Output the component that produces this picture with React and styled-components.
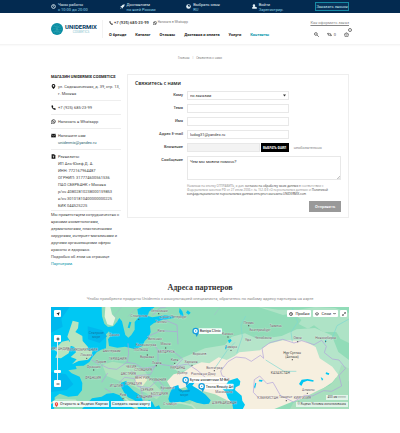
import React from 'react';
import styled, { createGlobalStyle } from 'styled-components';

const Global = createGlobalStyle`
  * { box-sizing: border-box; }
  body { margin: 0; background: #fff; color: #333; font: 4px/7px Roboto, "Noto Sans", sans-serif; }
  button, input, select, textarea { font: inherit; color: inherit; margin: 0; }
  a { color: inherit; text-decoration: none; }
  svg { display: block; flex: none; }
`;

const TopBar = styled.div`
  background: #032a50; color: #e3f0f6; height: 13px; padding: 0 51px;
  display: grid; grid-template-columns: 69fr 67fr 66fr 64fr 32fr; align-items: center;
`;
const TopItem = styled.a`
  display: flex; align-items: center; gap: 2px; line-height: 5px; white-space: nowrap;
  small { font-size: 4px; color: #8fd6e6; display: block; }
`;
const OrderCall = styled.button`
  height: 9px; border: 1px solid #168aa5; background: #08335a; color: #c2e9f0; padding: 0;
  line-height: 6px; font-size: 4px; white-space: nowrap;
`;
const Header = styled.header`
  height: 32px; padding: 0 51px; display: flex; border-bottom: 1px solid #f4f4f4; box-shadow: 0 1px 1px #fafafa;
`;
const Logo = styled.a`
  display: flex; align-items: center; width: 52px; gap: 2px; margin: 7px 0 6px; border-right: 1px solid #f3f3f3;
`;
const LogoText = styled.span`
  display: flex; flex-direction: column; align-items: center; line-height: 4px;
  b { font: 700 6px/6px Roboto, sans-serif; color: #073b61; }
  small { font-size: 3px; color: #7fc0cc; }
`;
const HeaderMain = styled.div`
  flex: 1; display: flex; flex-direction: column; padding: 6px 0 0 6px; gap: 5px;
`;
const HeaderRow = styled.div`display: flex; justify-content: space-between; align-items: center;`;
const Contacts = styled.div`
  display: flex; align-items: center; gap: 1px; color: #222;
`;
const Phone = styled.a`font-weight: 500; margin-right: 3px;`;
const Chat = styled.a`font-size: 3px; color: #777;`;
const Help = styled.a`color: #888; text-decoration: underline;`;
const Nav = styled.nav`display: flex; gap: 9px; font-weight: 700;`;
const NavLink = styled.a`color: ${p => (p.$active ? '#0795aa' : '#222')}; white-space: nowrap;`;
const Tools = styled.div`display: flex; align-items: center; gap: 8px;`;
const Tool = styled.button`
  position: relative; display: flex; gap: 2px; align-items: center; border: 0; padding: 0; background: none; line-height: 6px; color: #555;
`;
const Badge = styled.span`
  position: absolute; right: -3px; top: -4px; width: 4px; height: 4px; border: 1px solid #777; border-radius: 50%; background: #fff;
`;
const Crumbs = styled.nav`
  display: flex; justify-content: center; gap: 3px; padding-top: 10px; color: #888; height: 29px; font-size: 3px;
`;
const Main = styled.main`
  padding: 0 51px; display: grid; grid-template-columns: 70px 1fr; column-gap: 6px; align-items: start;
`;
const SideTitle = styled.h2`
  font-size: 4px; line-height: 6px; font-weight: 700; margin: 0; color: #222; white-space: nowrap;
`;
const SideRow = styled.div`
  display: flex; gap: 2px; padding: 3px 0; border-bottom: 1px solid #eee; color: #444; white-space: nowrap;
  &:last-of-type { padding-bottom: 1px; }
  svg { margin-top: 1px; color: #111; }
`;
const Accent = styled.a`color: #0795aa;`;
const Mail = styled.a`color: #24606c;`;
const SideText = styled.p`margin: 0; color: #444; white-space: nowrap;`;
const Panel = styled.form`border: 1px solid #eee; padding: 4px 7px 5px;`;
const PanelTitle = styled.h1`font: 600 5px/8px "Open Sans", sans-serif; margin: 0 0 4px; color: #222;`;
const Field = styled.div`
  display: grid; grid-template-columns: 48px 1fr; column-gap: 4px; margin-bottom: 4px;
`;
const Label = styled.label`text-align: right; line-height: 8px; font-weight: 500; color: #444;`;
const Control = styled.div`
  position: relative; width: ${p => (p.$wide ? '100%' : '66%')};
`;
const Input = styled.input`
  display: block; width: 100%; height: 9px; border: 1px solid #e8e8e8; background: #fff; padding: 0 2px; line-height: 7px; outline: 0;
`;
const Select = styled.select`
  display: block; width: 100%; height: 9px; border: 1px solid #e8e8e8; background: #fff; padding: 0 2px; line-height: 7px; appearance: none;
`;
const Arrow = styled.svg`position: absolute; right: 3px; top: 3px;`;
const Grip = styled.svg`position: absolute; right: 1px; bottom: 1px;`;
const Area = styled.textarea`
  display: block; width: 100%; height: 24px; border: 1px solid #e8e8e8; padding: 1px 2px; line-height: 7px; resize: none; outline: 0; overflow: hidden;
`;
const FileRow = styled.div`display: flex; width: 100%;`;
const FileBox = styled.div`display: flex; gap: 1px; width: 66%;`;
const FileName = styled.input`
  flex: 1; min-width: 0; height: 9px; border: 1px solid #e8e8e8; background: #f3f3f3; padding: 0 2px;
`;
const FileButton = styled.button`
  width: 28px; height: 9px; border: 0; background: #000; color: #fff; font-size: 3px; font-weight: 700; padding: 0; line-height: 8px;
`;
const Hint = styled.span`color: #888; line-height: 9px; margin-left: 5px;`;
const Legal = styled.p`
  margin: 0 0 0 52px; font: 3px/4px "Open Sans", sans-serif; color: #888; white-space: nowrap;
  a { color: #333; }
`;
const Submit = styled.button`
  display: block; margin: 5px 0 0 auto; width: 32px; height: 11px; border: 0; background: #999; color: #fff; font-weight: 500; padding: 0;
`;
const Partners = styled.section`padding: 15px 51px 23px; text-align: center;`;
const PartnersTitle = styled.h2`
  margin: 0; font: 700 8px/12px "Liberation Serif", serif; color: #333;
`;
const Lead = styled.p`margin: 1px 0 5px; color: #888; white-space: nowrap; display: flex; justify-content: center;`;
const MapFrame = styled.div`position: relative; height: 102px; overflow: hidden; background: #94ddba;`;
const MapSvg = styled.svg`width: 100%; height: 100%;`;
const MapTop = styled.div`position: absolute; right: 2px; top: 3px; display: flex; gap: 2px;`;
const MapBottom = styled.div`position: absolute; left: 2px; bottom: 2px; display: flex; gap: 2px;`;
const MapZoom = styled.div`
  position: absolute; left: 3px; top: 3px; display: flex; flex-direction: column; align-items: center;
`;
const MapButton = styled.button`
  display: flex; align-items: center; justify-content: center; gap: 2px; min-width: 7px; height: 7px;
  border: 0; border-radius: 1px; background: #fff; color: #222; padding: 0 2px; line-height: 6px; white-space: nowrap;
  ${p => p.$square && 'width: 7px; padding: 0;'}
  ${p => p.$spaced && 'margin-bottom: 18px;'}
`;
const Slider = styled.input`
  appearance: none; writing-mode: vertical-lr; direction: rtl; width: 7px; height: 38px; background: linear-gradient(90deg, transparent 3px, #dceef2 3px, #dceef2 4px, transparent 4px);
  &::-webkit-slider-thumb { appearance: none; width: 7px; height: 3px; background: #fff; border-radius: 1px; }
`;
const MapLink = styled.a`
  display: flex; align-items: center; gap: 1px; height: 6px; background: #ffffffdd; color: #333; padding: 0 1px; line-height: 6px; white-space: nowrap;
`;
const MapLegal = styled.div`
  position: absolute; right: 1px; bottom: 2px; display: flex; flex-direction: column; align-items: flex-end; gap: 2px;
  font-size: 3px; line-height: 5px; color: #444;
  span { background: #ffffffaa; padding: 0 2px; }
`;

const paths = {
  clock: <><circle cx="12" cy="12" r="9" fill="none" stroke="currentColor" strokeWidth="4" /><path d="M12 6v6l4 3" fill="none" stroke="currentColor" strokeWidth="3" /></>,
  rocket: <path d="M23 1 13 4 7 10 1 12l5 3 3 3 3 5 2-6 6-6zM4 17l-3 6 6-3z" fill="currentColor" />,
  globe: <><circle cx="12" cy="12" r="11" fill="currentColor" /><path d="M11 4l6 1 2 6-5 4-3-5-3-1z" fill="#052a50" /></>,
  user: <path d="M10 1a5 6 0 0 1 3 11l10 4v7H1v-7l5-4A6 6 0 0 1 10 1z" fill="currentColor" />,
  phone: <path d="M3 2l5-1 3 7-3 3 6 6 3-3 6 4-1 5C12 24 0 12 3 2z" fill="currentColor" />,
  chat: <path d="M2 22l2-6a9 9 0 1 1 4 4zM8 7c0 5 4 9 9 9M8 7l2 4M13 14l4 1" fill="none" stroke="currentColor" strokeWidth="3" />,
  pin: <path fillRule="evenodd" d="M12 0a9 9 0 0 1 9 9c0 6-9 15-9 15S3 15 3 9a9 9 0 0 1 9-9zm0 5a4 4 0 1 0 0 8 4 4 0 0 0 0-8z" fill="currentColor" />,
  mail: <><path d="M1 4h22v17H1z" fill="currentColor" /><path d="M1 7l11 7 11-7" fill="none" stroke="#fff" strokeWidth="2" /></>,
  doc: <><path d="M3 1h12l6 6v16H3z" fill="currentColor" /><path d="M8 10h8M12 10v8" stroke="#fff" strokeWidth="3" /></>,
  search: <path d="M15 15l8 8M9 3a6 6 0 1 1 0 13A6 6 0 0 1 9 3z" fill="none" stroke="currentColor" strokeWidth="4" />,
  swap: <path d="M1 8h16v9M23 16H7V8M1 8l4-4M1 8l4 4M23 16l-4-4M23 16l-4 4" fill="none" stroke="currentColor" strokeWidth="3" />,
  cart: <path d="M2 9h20l-3 13H5zM7 9l4-7M17 9l-4-7M8 15h8" fill="none" stroke="currentColor" strokeWidth="3" />,
  arrow: <path d="M22 2 15 22l-4-9-9-4z" fill="currentColor" />,
  expand: <path d="M4 20 20 4M13 3h8v8M3 13v8h8" fill="none" stroke="currentColor" strokeWidth="3" />,
  layers: <path d="M12 3l10 6-10 6L2 9zM2 14l10 6 10-6" fill="none" stroke="currentColor" strokeWidth="3" />,
  chevron: <path d="M3 8l9 9 9-9" fill="none" stroke="currentColor" strokeWidth="6" />,
  marker: <><path d="M12 1a8 8 0 0 1 8 8c0 6-8 14-8 14S4 15 4 9a8 8 0 0 1 8-8z" fill="#f43d32" /><circle cx="12" cy="9" r="3" fill="#fff" /></>,
  plus: <path d="M12 3v18M3 12h18" stroke="currentColor" strokeWidth="5" />,
  minus: <path d="M3 12h18" stroke="currentColor" strokeWidth="5" />,
};
const Icon = ({ name, size = 5 }) => (
  <svg width={size} height={size} viewBox="0 0 24 24" aria-hidden="true">{paths[name]}</svg>
);

const cities = [
  [282, 55, 'Стокгольм'], [343, 40, 'Хельсинки'], [386, 58, 'Санкт-Петербург'], [348, 75, 'Таллин'], [348, 102, 'Рига'], [330, 124, 'Вильнюс'],
  [303, 142, 'Калининград'], [362, 141, 'Минск'], [364, 163, 'БЕЛАРУСЬ'], [288, 159, 'ПОЛЬША'], [306, 178, 'Варшава'], [207, 112, 'Дания'],
  [200, 162, 'Амстердам'], [218, 185, 'ГЕРМАНИЯ'], [168, 195, 'Париж'], [146, 208, 'Франция'], [144, 243, 'ФРАНЦИЯ'], [112, 158, 'ВЕЛИКОБРИТАНИЯ'],
  [124, 173, 'Лондон'], [46, 155, 'ИРЛАНДИЯ'], [258, 208, 'ЧЕХИЯ'], [294, 219, 'СЛОВАКИЯ'], [292, 241, 'ВЕНГРИЯ'], [250, 231, 'АВСТРИЯ'],
  [214, 265, 'ИТАЛИЯ'], [234, 294, 'Рим'], [265, 260, 'ХОРВАТИЯ'], [306, 279, 'СЕРБИЯ'], [298, 299, 'АЛБАНИЯ'], [338, 249, 'РУМЫНИЯ'],
  [343, 291, 'БОЛГАРИЯ'], [368, 271, 'Бухарест'], [335, 197, 'Львов'], [389, 188, 'Киев'], [398, 213, 'УКРАИНА'], [438, 194, 'Харьков'],
  [412, 227, 'Днепр'], [464, 171, 'Воронеж'], [475, 229, 'Ростов-на-Дону'], [375, 319, 'Стамбул'], [611, 76, 'Пермь'], [645, 98, 'Екатеринбург'],
  [692, 86, 'Тюмень'], [655, 121, 'Челябинск'], [548, 110, 'Казань'], [609, 127, 'Уфа'], [558, 149, 'Самара'], [758, 123, 'Омск'],
  [842, 122, 'Новосибирск'], [508, 212, 'Волгоград'], [537, 283, 'Махачкала'], [538, 318, 'АЗЕРБАЙДЖАН'], [668, 303, 'УЗБЕКИСТАН'], [722, 299, 'Ташкент'], [772, 303, 'КИРГИЗИЯ'], [790, 278, 'Алматы'],
];
const dots = [[281, 63], [341, 46], [362, 149], [307, 170], [125, 180], [146, 215], [234, 301], [389, 195], [441, 201], [611, 82], [549, 116], [558, 156], [758, 130], [842, 129], [742, 184], [724, 307], [787, 285], [334, 202], [508, 217]];
const lakes = 'M549 126l8-4 3 5-8 8zM540 150l4-10 3 3-4 11zM627 266l4-13 3 2-4 16zM643 244l10 1-2 5-10-1zM762 257l8-13 18-2 18 4-1 4-18-3-12 5-6 11zM827 236l8 6-4 5zM843 222l10 3-2 5-9-3zM840 128l4-5-2 12zM404 29l8 10 4 14-6 3-8-15zM428 36l9 7-6 6-8-6zM248 88l5-18 6 2-5 18z';
const pins = [[452, 98, 464, 71, 'Baniga Clinic'], [422, 245, 434, 117, 'Бутик косметики M-Bel'], [470, 264, 482, 88, 'Teona Beauty Art']];

const PartnerMap = () => (
  <MapSvg viewBox="18 26 894 306" preserveAspectRatio="xMidYMid slice" role="img" aria-label="Карта партнеров">
    <path d="M0 0H930V350H0z" fill="#91dcb8" />
    <path d="M380 205l30-25 35-15 35-15 60-10 20-25 40-10 40 18 70-10 45-20 55-4 50 22 20 50 40 30v60l-40-10-100-50-180-10-200 40z" fill="#b5e5ca" />
    <path d="M640 26l60 8 60 0 50-8 60 3 42 15v90l-26-13-12-20-40 0-27-20-18 10-28-14 8-12-25-20-30 5z" fill="#aee3c6" />
    <path d="M172 200l30-10 45 8 48 15 30 40 30 30-20 20-70-40-80-30zM58 180l34-20 30 10-22 24z" fill="#aee2bd" />
    <path d="M366 249l20-21 30-7 30-20 24-9 23 3 28-18 24 8 24-12 14-11 62-6 24-19 44-11 64 1 35 19 12 34 38 25 18 24-18 23-39 26-40 20-45 14-50 20H455l22-30-18-29-40-6-36 10z" fill="#f6efdf" />
    <path d="M272 237l25-5 10 13-14 18-23-7z" fill="#e9edcc" />
    <path d="M465 276l45 12 58 28 20 20H450l-15-20zM735 332l10-19 37-18 40-20 33-14 22-26 12-35 22 10v122z" fill="#a8dfbd" />
    <path d="M18 26H170l1 28 7 22 11 10 16-2 10-12 8-13 8 10 5 21 5 20 9 8 9-8 10-16 0-23 12-14-4-24 14-7h38l-17 14-4 13 14 4 39-6 26 3 1 5-37 6-24 9-12 9 2 18-6 15-12 12-7 16-23 8-29-7-23 3-25-5-3-20 8-11-5-13-9 9 1 22-1 20-15 4-13 8-13 15-9 14-17 11-24 1 3 9-25 4 10 9 24 10 8 19-1 22-13 16-28 3-26-9-15 11-2 43H18z" fill="#00c8f3" />
    <path d="M18 26h56l-25 35 4 24-35 18zM128 84l44 12 14 18-22 20-35-11zM18 220l45 8 22 30-20 17-47 6z" fill="#00b8ee" />
    <path d="M83 67l18 5-2 18-8 11 21 12 1 15 16 18-2 9 16 2-5 18-9 9-28 4-20 10 14-15-18-7 16-14-5-16-18-6 5-12-8-13zM51 130l20-4 7 14-7 25-23 15-17-2 7-16-11-8z" fill="#b7e5bf" />
    <path d="M181 26l15 0 5 22 10 10-8 24-16-4-8-23z" fill="#e5f4df" />
    <path d="M111 332l30-32 29-5 15-9 20-2 19 7 14 18 18 15 14 8zM228 254l16-7 3 12 20 20 22 14 5 17 16 22h-30l-5-13 6-3-14-11-18-8-12-15-9-17zM311 305l11 6 8 15 12-5 5 11h-39z" fill="#00c5f0" />
    <path d="M370 302l5-18 9-19 16-5 2 9 11 8 16-4-7-9 18-17 10 4-8 11 18 11 22 16 15 17-5 10-15 2-22-5-21-8-24 8-22 4-14-5z" fill="#00bdf1" />
    <path d="M551 247l26-8 9 10-2 12-12 6-2 8 20 17 2 15 8 12-7 14h-28l-4-19-12-14-7-19-10-10 9-9z" fill="#00c8f3" />
    <path d={lakes} fill="#00c8f3" />
    <path d="M18 315l18-11 55 2 10 14M240 300l25 19M360 318l45-5 35 8 12 11" fill="none" stroke="#bce6c9" strokeWidth="5" />
    <g fill="none" stroke="#b1a0db" strokeWidth="2">
      <path d="M249 135l2 31-5 26 24 4 23 14 37-5 9-16 0-34-14-19M339 155l47 5 27 22-21 22-48-6M330 202l-14 27-42 3-17-16M246 192l-31 21-25-3-22-11M221 254l18-17 29 4 10 23 35 4 26-24 17 21-10 26-44 4-10 18M286 264l7 29M322 51l23-22 18-3M342 58l54 22 3 58M306 115l42-18 48 3M392 204l36-7 29 19 24 21M162 199l-22-14M170 252l18-28M179 270l19 12" />
      <path d="M527 218l22-28 24-14 28 3 18 10 27-18 10 9-5-30 24-17 38-10 34 11 23-7 37 12 23-13 14 18-6 19 24 19 20 3 20 25-20 21 8 32-30 16-24-2-34 16-23-2-34 20-39-20-22-39-18 4-22-23-16 11-3 38 19 20M527 218l4 14 18 9" />
      <path d="M230 26l-22 25 10 22M250 54l25-26M530 20l-22 30" opacity=".4" />
    </g>
    <path d="M575 165l17-50-4-34 14-28M742 130l-4-28 20-30-16-43M860 124l16-42 36-20M508 212l38-55 24-25M662 185l55 34 37 0" fill="none" stroke="#7bd8d2" strokeWidth="2" />
    <g fontFamily="Roboto, sans-serif" fontSize="10" fill="#6b5c66" textAnchor="middle">
      {cities.map(([x, y, t]) => <text key={t} x={x} y={y} stroke="#fff" strokeOpacity=".45" strokeWidth="2" paintOrder="stroke">{t}</text>)}
      <text x="154" y="107" fill="#117aa7">Северное</text><text x="154" y="119" fill="#117aa7">море</text>
      <text x="418" y="282" fill="#117aa7">Чёрное</text><text x="418" y="294" fill="#117aa7">море</text>
      <text x="741" y="168" fill="#444">Нур-Султан</text><text x="741" y="180" fill="#444">(Астана)</text>
      <text x="706" y="227" fill="#555">КАЗАХСТАН</text>
    </g>
    {dots.map(([x, y]) => <circle key={`${x}-${y}`} cx={x} cy={y} r="2" fill="#555" />)}
    {pins.map(([x, y, lx, w, t]) => (
      <g key={t}>
        <rect x={lx - 4} y={y - 8} width={w} height="17" rx="3" fill="#fff" fillOpacity=".92" />
        <path d={`M${x - 2} ${y + 6}l5 12 6-12z`} fill="#189ddd" />
        <circle cx={x} cy={y} r="8" fill="#fff" stroke="#189ddd" strokeWidth="4" />
        <circle cx={x} cy={y} r="2" fill="#189ddd" />
        <text x={lx} y={y + 4} fontFamily="Roboto, sans-serif" fontSize="11" fill="#222">{t}</text>
      </g>
    ))}
  </MapSvg>
);

const nav = ['О бренде', 'Каталог', 'Отзывы', 'Доставка и оплата', 'Услуги', 'Контакты'];
const topItems = [
  ['clock', 'Часы работы', 'с 10:00 до 20:00'], ['rocket', 'Доставляем', 'по всей России'],
  ['globe', 'Выбрать язык', 'RU'], ['user', 'Войти', 'Зарегистрир.'],
];

export default function App() {
  return (
    <>
      <Global />
      <TopBar>
        {topItems.map(([icon, a, b]) => (
          <TopItem href="#" key={icon}><Icon name={icon} /><span>{a}<small>{b}</small></span></TopItem>
        ))}
        <OrderCall>Заказать звонок</OrderCall>
      </TopBar>
      <Header>
        <Logo href="#">
          <svg width="12" height="12" viewBox="0 0 24 24" aria-hidden="true">
            <circle cx="12" cy="12" r="12" fill="#078ca2" />
            <path d="M3 8c6-5 12 4 18-1M2 13c7-5 13 4 20-1M4 18c6-5 11 3 16-1M12 1v22M6 3l12 18M18 3L6 21" fill="none" stroke="#3aa6b5" strokeWidth="1" />
          </svg>
          <LogoText><b>UNIDERMIX</b><small>COSMETICS</small></LogoText>
        </Logo>
        <HeaderMain>
          <HeaderRow>
            <Contacts>
              <Icon name="phone" size={4} /><Phone href="tel:+79256852399">+7 (925) 685-23-99</Phone>
              <Icon name="chat" size={4} /><Chat href="#">Написать в Whatsapp</Chat>
            </Contacts>
            <Help href="#">Как оформить заказ</Help>
          </HeaderRow>
          <HeaderRow>
            <Nav>{nav.map(t => <NavLink href="#" key={t} $active={t === 'Контакты'}>{t}</NavLink>)}</Nav>
            <Tools>
              <Tool aria-label="Поиск"><Icon name="search" size={5} /></Tool>
              <Tool aria-label="Сравнение"><Icon name="swap" size={5} />0</Tool>
              <Tool aria-label="Корзина"><Icon name="cart" size={5} /><Badge /></Tool>
            </Tools>
          </HeaderRow>
        </HeaderMain>
      </Header>
      <Crumbs><a href="#">Главная</a><span>|</span><span>Свяжитесь с нами</span></Crumbs>
      <Main>
        <aside>
          <SideTitle>МАГАЗИН UNIDERMIX COSMETICS</SideTitle>
          <SideRow><Icon name="pin" /><span>ул. Садовническая, д. 39, стр. 13,<br />г. Москва</span></SideRow>
          <SideRow><Icon name="phone" /><a href="tel:+79256852399">+7 (925) 685-23-99</a></SideRow>
          <SideRow><Icon name="chat" /><a href="#">Написать в Whatsapp</a></SideRow>
          <SideRow><Icon name="mail" /><span>Напишите нам<br /><Mail href="mailto:unidermix@yandex.ru">unidermix@yandex.ru</Mail></span></SideRow>
          <SideRow><Icon name="doc" /><span>Реквизиты:<br />ИП Аль-Юсеф Д. А.<br />ИНН: 772167964487<br />ОГРНИП: 317774600561536<br />ПАО СБЕРБАНК г Москва<br />р/сч 40802810238000159853<br />к/сч 30101810400000000225<br />БИК 044525225</span></SideRow>
          <SideText>Мы приветствуем сотрудничество с<br />врачами косметологами,<br />дерматологами, пластическими<br />хирургами, интернет-магазинами и<br />другими организациями сферы<br />красоты и здоровья.<br />Подробно об этом на странице<br /><Accent href="#">Партнерам.</Accent></SideText>
        </aside>
        <Panel onSubmit={e => e.preventDefault()}>
          <PanelTitle>Свяжитесь с нами</PanelTitle>
          <Field><Label htmlFor="to">Кому</Label><Control>
            <Select id="to"><option>по заказам</option></Select>
            <Arrow width="3" height="3" viewBox="0 0 6 6"><path d="M0 1h6L3 5z" fill="#333" /></Arrow>
          </Control></Field>
          <Field><Label htmlFor="topic">Тема</Label><Control><Input id="topic" /></Control></Field>
          <Field><Label htmlFor="name">Имя</Label><Control><Input id="name" /></Control></Field>
          <Field><Label htmlFor="email">Адрес E-mail</Label><Control><Input id="email" type="email" defaultValue="ludog31@yandex.ru" /></Control></Field>
          <Field><Label htmlFor="file">Вложение</Label><FileRow>
            <FileBox><FileName id="file" readOnly /><FileButton type="button">ВЫБРАТЬ ФАЙЛ</FileButton></FileBox><Hint>необязательно</Hint>
          </FileRow></Field>
          <Field><Label htmlFor="message">Сообщение</Label><Control $wide>
            <Area id="message" defaultValue="Чем мы можем помочь?" />
            <Grip width="3" height="3" viewBox="0 0 6 6"><path d="M0 6 6 0M3 6l3-3" stroke="#888" /></Grip>
          </Control></Field>
          <Legal>Нажимая на кнопку ОТПРАВИТЬ, я даю <a href="#">согласие на обработку моих данных</a> в соответствии с<br />Федеральным законом РФ от 27 июля 2006 г. № 152-ФЗ «О персональных данных» и <a href="#">Политикой<br />конфиденциальности персональных данных интернет-магазина UNIDERMIX.com</a></Legal>
          <Submit>Отправить</Submit>
        </Panel>
      </Main>
      <Partners>
        <PartnersTitle>Адреса партнеров</PartnersTitle>
        <Lead>Чтобы приобрести продукты Unidermix с консультацией специалиста, обратитесь по любому адресу партнеров на карте</Lead>
        <MapFrame>
          <PartnerMap />
          <MapZoom>
            <MapButton $square $spaced aria-label="Моё местоположение"><Icon name="arrow" size={4} /></MapButton>
            <MapButton $square aria-label="Приблизить"><Icon name="plus" size={4} /></MapButton>
            <Slider type="range" aria-label="Масштаб" min="0" max="100" defaultValue="20" />
            <MapButton $square aria-label="Отдалить"><Icon name="minus" size={4} /></MapButton>
          </MapZoom>
          <MapTop>
            <MapButton><Icon name="clock" size={4} />Пробки</MapButton>
            <MapButton><Icon name="layers" size={4} />Слои<Icon name="chevron" size={3} /></MapButton>
            <MapButton $square aria-label="На весь экран"><Icon name="expand" size={4} /></MapButton>
          </MapTop>
          <MapBottom>
            <MapLink href="#"><Icon name="marker" size={5} />Открыть в Яндекс Картах</MapLink>
            <MapLink href="#">Создать свою карту</MapLink>
          </MapBottom>
          <MapLegal><span>400 км ━━━━</span><span>© Яндекс Условия использования</span></MapLegal>
        </MapFrame>
      </Partners>
    </>
  );
}
